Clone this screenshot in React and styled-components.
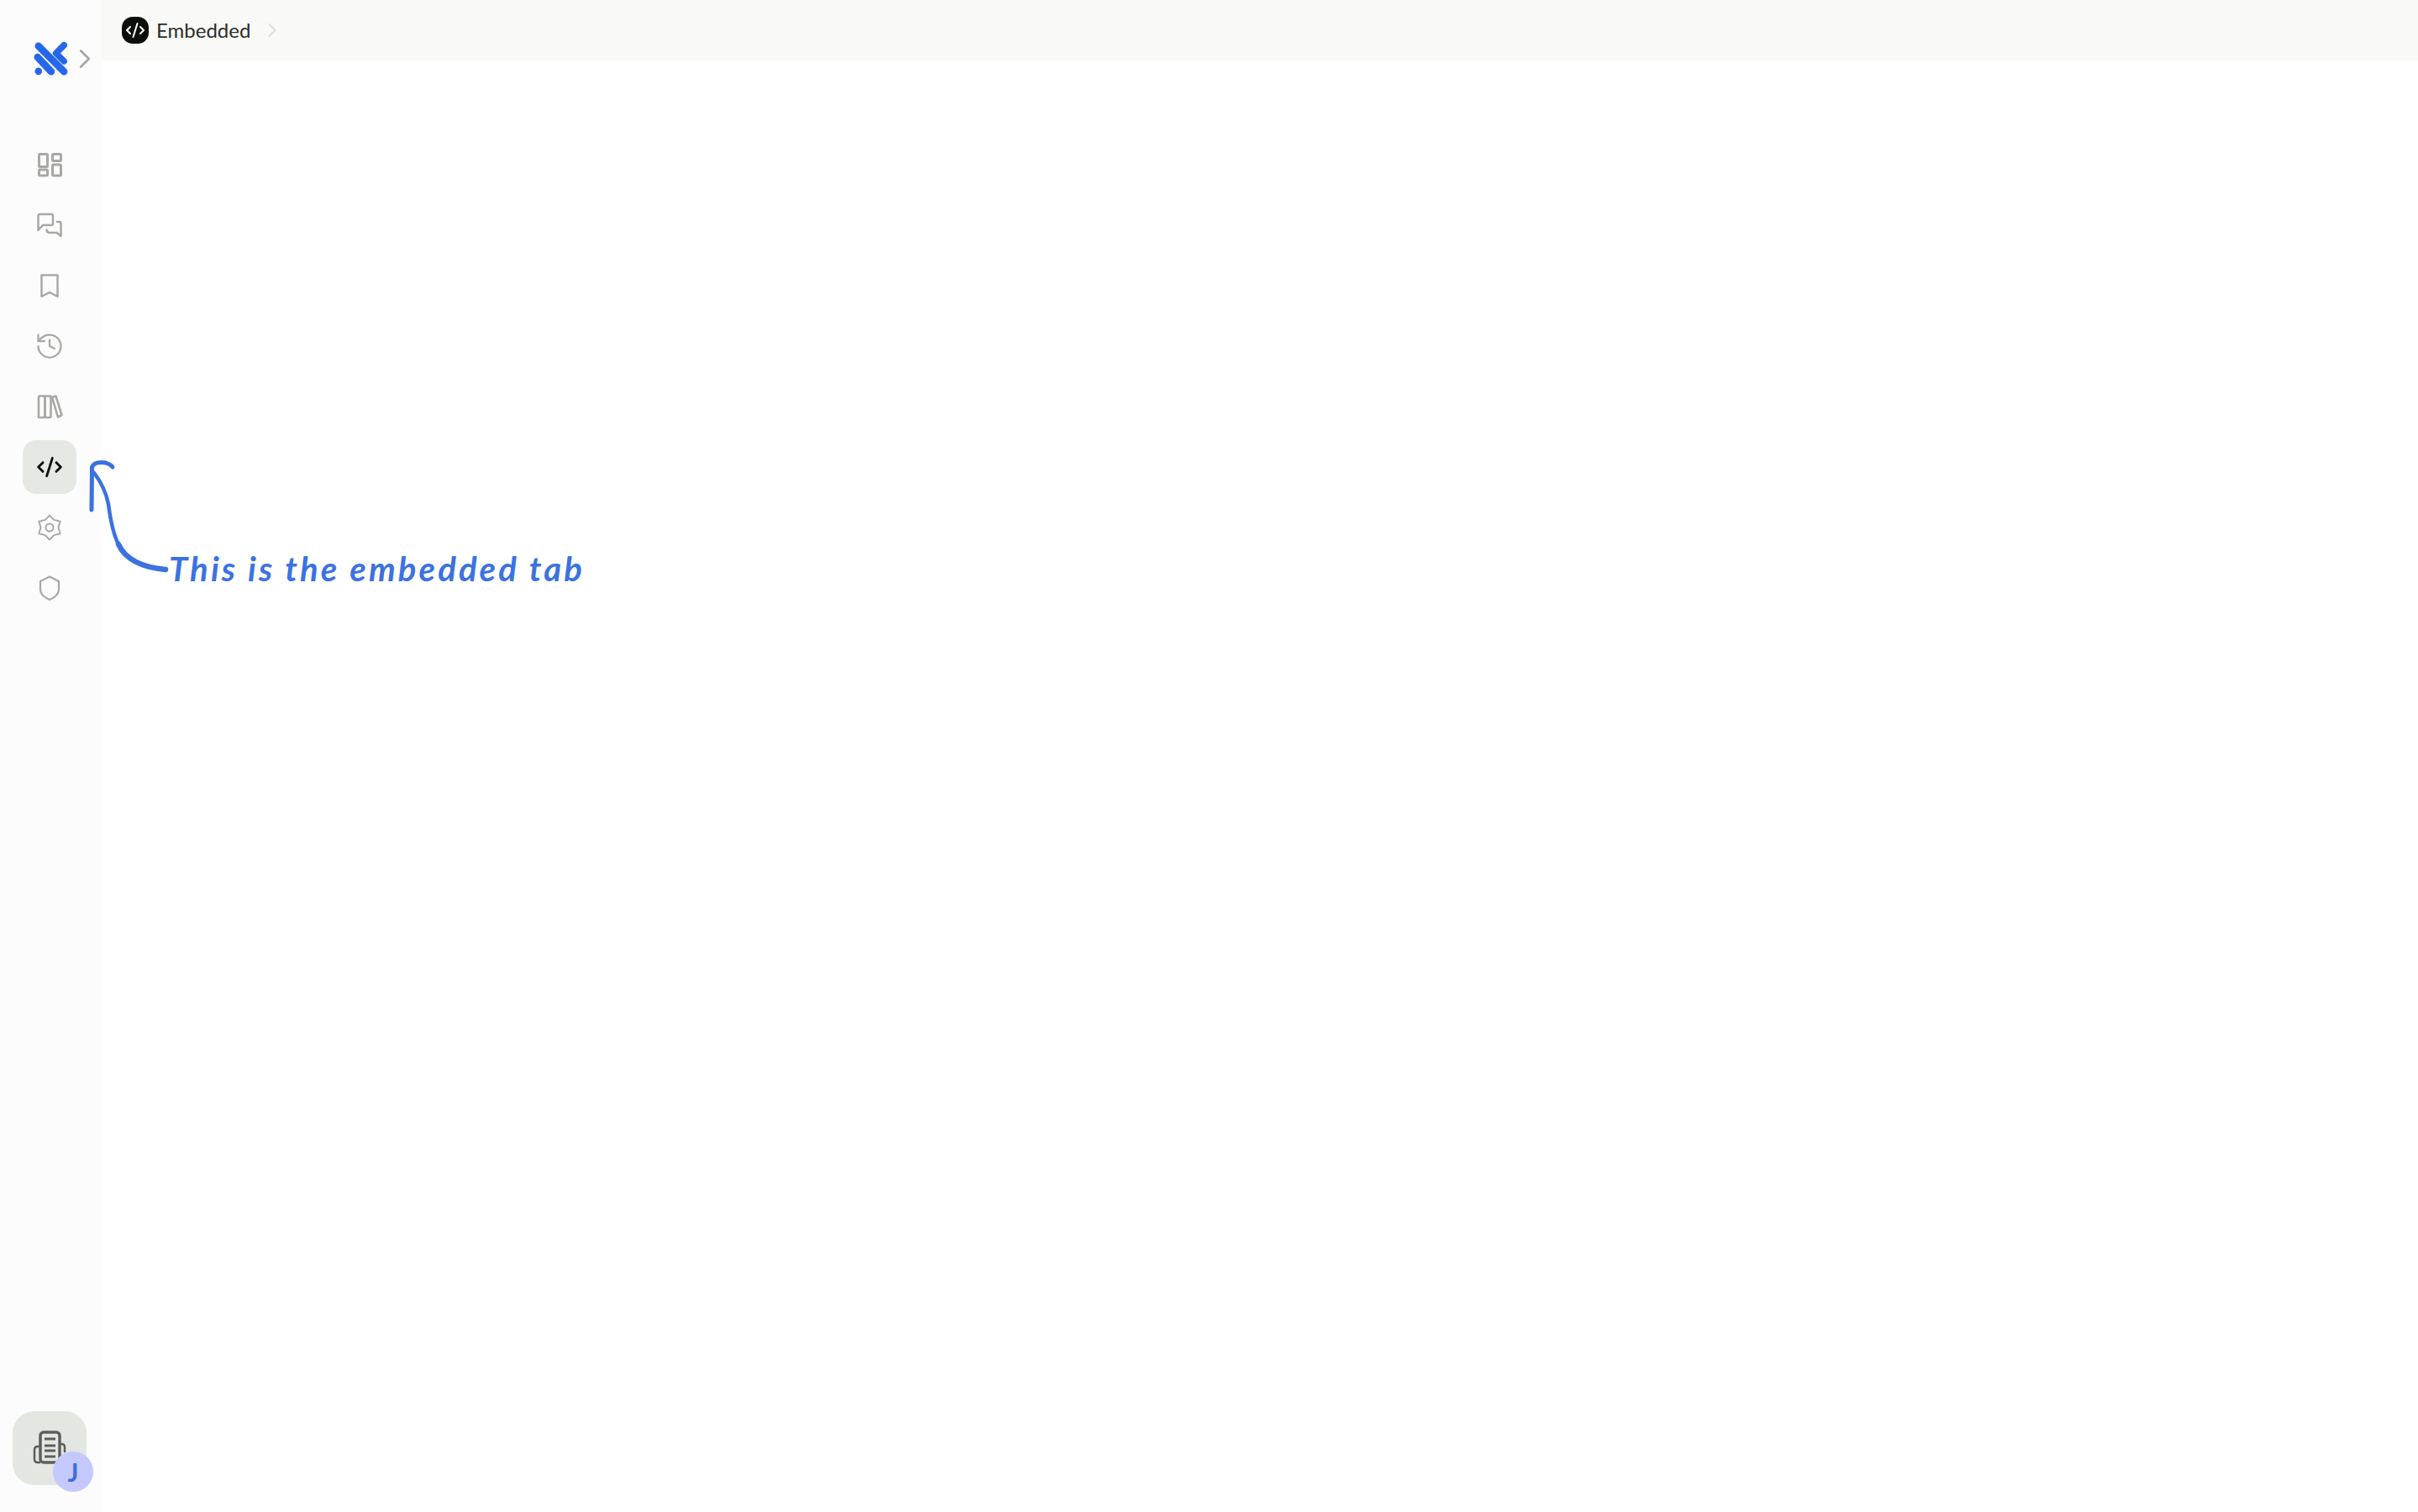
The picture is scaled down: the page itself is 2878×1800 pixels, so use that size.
import React from "react";
import styled, { createGlobalStyle } from "styled-components";
import { History, CodeXml, ChevronRight } from "lucide-react";

const GlobalStyle = createGlobalStyle`
  html, body {
    margin: 0;
    padding: 0;
    background: #ffffff;
    font-family: Lato, "Liberation Sans", sans-serif;
  }
`;

const Page = styled.div`
  position: relative;
  display: flex;
  width: 100%;
  height: 100vh;
  overflow: hidden;
`;

const Sidebar = styled.aside`
  width: 120px;
  flex-shrink: 0;
  display: flex;
  flex-direction: column;
  background: #fcfcfc;
  padding: 48px 0 24px;
  box-sizing: border-box;
`;

const LogoRow = styled.div`
  display: flex;
  align-items: center;
  height: 44px;
  padding-left: 40px;
  color: #a8a8a4;
`;

const Nav = styled.nav`
  display: flex;
  flex-direction: column;
  align-items: center;
  gap: 8px;
  margin: 72px 2px 0 0;
`;

const NavItem = styled.div`
  width: 64px;
  height: 64px;
  display: flex;
  align-items: center;
  justify-content: center;
  border-radius: 16px;
  background: ${(p) => (p.$active ? "#e6e8e4" : "transparent")};
  color: ${(p) => (p.$active ? "#111311" : "#a8a8a5")};
`;

const Workspace = styled.div`
  position: relative;
  width: 88px;
  height: 88px;
  margin: auto 0 8px 15px;
  display: flex;
  align-items: center;
  justify-content: center;
  border-radius: 26px;
  background: #e4e6e2;
`;

const Avatar = styled.div`
  position: absolute;
  right: -8px;
  bottom: -8px;
  width: 48px;
  height: 48px;
  display: flex;
  align-items: center;
  justify-content: center;
  border-radius: 50%;
  background: #c5c8fd;
  color: #3b6fe0;
  font-size: 30px;
  font-weight: 700;
`;

const Main = styled.main`
  flex: 1;
  display: flex;
  flex-direction: column;
  background: #ffffff;
`;

const TopBar = styled.header`
  height: 72px;
  display: flex;
  align-items: center;
  padding-left: 25px;
  background: #f9f9f8;
`;

const Crumb = styled.div`
  display: flex;
  align-items: center;
  gap: 9px;
  color: #2a2d2a;
  font-size: 24px;
`;

const CrumbLabel = styled.span`
  margin-bottom: 2px;
`;

const CrumbIcon = styled.span`
  width: 32px;
  height: 32px;
  display: flex;
  align-items: center;
  justify-content: center;
  border-radius: 13px;
  background: #0c0e0c;
  color: #ffffff;
`;

const CrumbArrow = styled.span`
  display: flex;
  margin-left: 3px;
  color: #dfe2df;
`;

const Annotation = styled.div`
  position: absolute;
  left: 201px;
  top: 652px;
  color: #3b72e0;
  font-family: Lato, sans-serif;
  font-style: italic;
  font-weight: 700;
  font-size: 40px;
  line-height: 50px;
  letter-spacing: 3.15px;
  white-space: nowrap;
`;

const ArrowMark = styled.svg`
  position: absolute;
  left: 100px;
  top: 540px;
`;

const Logo = () => (
  <svg width="44" height="44" viewBox="0 0 44 44" fill="none" stroke="#2467ea" strokeWidth="9" strokeLinecap="round">
    <path d="M6 6 L38 38" />
    <path d="M5 20 L22 38" />
    <path d="M6 37.5 L6.1 37.6" />
    <path d="M38 5 L28 15 L38 25" strokeLinejoin="round" strokeWidth="8" />
  </svg>
);

const Glyph = ({ children, width = 2.5 }) => (
  <svg width="32" height="32" viewBox="0 0 32 32" fill="none" stroke="currentColor" strokeWidth={width} strokeLinejoin="round" strokeLinecap="round">
    {children}
  </svg>
);

const DashboardIcon = () => (
  <Glyph width={3}>
    <rect x="3.5" y="3.5" width="10" height="15" rx="1" />
    <rect x="19.5" y="3.5" width="10" height="8" rx="1" />
    <rect x="3.5" y="22" width="10" height="7" rx="1" />
    <rect x="19.5" y="16" width="10" height="13" rx="1" />
  </Glyph>
);

const ChatIcon = () => (
  <Glyph>
    <path d="M2.5 22 V5 Q2.5 3 4.5 3 H18 Q20 3 20 5 V14 Q20 16 18 16 H8 Z" />
    <path d="M25 12 H27 Q29.5 12 29.5 14 V29 L24.5 25 H16 Q13 25 12.5 21.5" />
  </Glyph>
);

const BookmarkIcon = () => (
  <Glyph>
    <path d="M6.5 3.5 H25.5 V29 L16 24 L6.5 29 Z" />
  </Glyph>
);

const LibraryIcon = () => (
  <Glyph width={2.6}>
    <rect x="3" y="3.5" width="7.5" height="25.5" rx="1" />
    <rect x="10.5" y="3.5" width="7" height="25.5" rx="1" />
    <path d="M19 5 L23.5 3.5 L30.5 26 L26 28.5 Z" />
  </Glyph>
);

const GearIcon = () => (
  <Glyph width={2}>
    <path d="M16 1.5 L21.2 6.9 L28.6 8.7 L26.5 16 L28.6 23.3 L21.2 25.1 L16 30.5 L10.8 25.1 L3.4 23.3 L5.5 16 L3.4 8.7 L10.8 6.9 Z" />
    <circle cx="16" cy="16" r="4.5" />
  </Glyph>
);

const ShieldIcon = () => (
  <Glyph width={2.2}>
    <path d="M16 2.5 L27 8 V18 Q27 25 16 30 Q5 25 5 18 V8 Z" />
  </Glyph>
);

const HistoryIcon = () => <History size={36} strokeWidth={1.5} />;
const CodeIcon = () => <CodeXml size={32} strokeWidth={2.2} />;

const WorkspaceIcon = () => (
  <svg width="40" height="42" viewBox="0 0 40 42" fill="none" stroke="#5a605a" strokeWidth="3.5" strokeLinejoin="round">
    <rect x="9" y="2" width="23" height="36" rx="4" />
    <path d="M9 19 H6 Q2 19 2 23 V34 Q2 38 6 38 H9" strokeWidth="2.5" />
    <path d="M32 16 H34 Q38 16 38 20 V26" strokeWidth="2.5" />
    <path d="M14 10 H27 M14 18 H27 M14 24 H27 M14 31 H27" strokeWidth="3" />
  </svg>
);

const navIcons = [DashboardIcon, ChatIcon, BookmarkIcon, HistoryIcon, LibraryIcon, CodeIcon, GearIcon, ShieldIcon];

export default function App() {
  return (
    <Page>
      <GlobalStyle />
      <Sidebar>
        <LogoRow>
          <Logo />
          <ChevronRight size={40} strokeWidth={1.8} />
        </LogoRow>
        <Nav>
          {navIcons.map((Icon, index) => (
            <NavItem key={index} $active={index === 5}>
              <Icon />
            </NavItem>
          ))}
        </Nav>
        <Workspace>
          <WorkspaceIcon />
          <Avatar>J</Avatar>
        </Workspace>
      </Sidebar>
      <Main>
        <TopBar>
          <Crumb>
            <CrumbIcon>
              <CodeXml size={24} strokeWidth={2} />
            </CrumbIcon>
            <CrumbLabel>Embedded</CrumbLabel>
            <CrumbArrow>
              <ChevronRight size={28} strokeWidth={2} />
            </CrumbArrow>
          </Crumb>
        </TopBar>
      </Main>
      <ArrowMark width="110" height="146" viewBox="100 540 110 146" fill="none" stroke="#3b72e0" strokeLinecap="round">
        <path d="M109 607 L109.5 556 Q112 550 122 550.5 Q130 551 134 556" strokeWidth="5" />
        <path d="M112 563 Q125 580 129 600 Q133 632 141 648" strokeWidth="4.5" />
        <path d="M141 648 Q153 674 197 678" strokeWidth="6.5" />
      </ArrowMark>
      <Annotation>This is the embedded tab</Annotation>
    </Page>
  );
}
